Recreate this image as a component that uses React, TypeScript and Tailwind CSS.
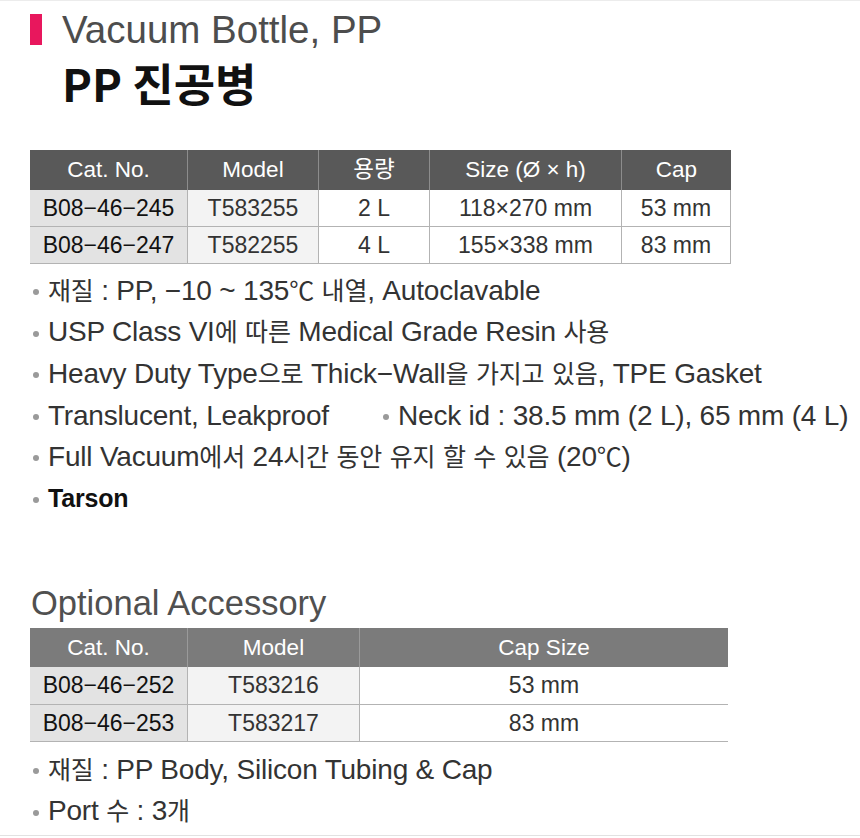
import React from "react";

const FONT = "font-['Liberation_Sans','Noto_Sans_CJK_KR',sans-serif]";

function Mixed({ text }: { text: string }) {
  const parts = text.split(/([\uAC00-\uD7A3\u3131-\u318E℃]+)/);
  return (
    <>
      {parts.map((p, i) =>
        /[\uAC00-\uD7A3\u3131-\u318E℃]/.test(p) ? (
          <span key={i} className="text-[25px]">
            {p}
          </span>
        ) : (
          <React.Fragment key={i}>{p}</React.Fragment>
        )
      )}
    </>
  );
}

function Dot() {
  return <span className="inline-block w-[6px] h-[6px] rounded-full bg-[#9a9a9a] shrink-0 mt-[3px]" />;
}

function Bullet({ text, bold = false }: { text: string; bold?: boolean }) {
  return (
    <div className="flex items-center h-[41.5px] pl-[33px] gap-[9px]">
      <Dot />
      <span
        className={`leading-[41.5px] tracking-[-0.2px] whitespace-nowrap ${
          bold ? "font-bold text-[#111] text-[25px]" : "text-[#333] text-[28px]"
        }`}
      >
        <Mixed text={text} />
      </span>
    </div>
  );
}

export default function App() {
  const t1 = [
    ["B08−46−245", "T583255", "2 L", "118×270 mm", "53 mm"],
    ["B08−46−247", "T582255", "4 L", "155×338 mm", "83 mm"],
  ];
  const t2 = [
    ["B08−46−252", "T583216", "53 mm"],
    ["B08−46−253", "T583217", "83 mm"],
  ];
  return (
    <div className={`w-[860px] h-[838px] bg-white flex flex-col overflow-hidden border-t border-[#ececec] ${FONT}`}>
      {/* Title */}
      <div className="flex items-start pl-[30px] mt-[10px]">
        <span className="w-[12px] h-[31px] bg-[#e8175d] mt-[3px]" />
        <span className="ml-[20px] text-[38.5px] leading-[38px] text-[#4d4d4d]">Vacuum Bottle, PP</span>
      </div>
      <div className="pl-[62px] mt-[12px] font-['Noto_Sans_CJK_KR',sans-serif] text-[45px] leading-[44px] font-bold text-[#111]">
        PP 진공병
      </div>

      {/* Table 1 */}
      <div className="ml-[30px] mt-[45px] w-[701px] grid grid-cols-[158px_131px_111px_192px_109px]">
        {["Cat. No.", "Model", "용량", "Size (Ø × h)", "Cap"].map((h, i) => (
          <div
            key={h}
            className={`h-[40px] bg-[#595959] text-white text-[22.5px] flex items-center justify-center ${
              i < 4 ? "border-r border-[#8c8c8c]" : ""
            }`}
          >
            {h}
          </div>
        ))}
        {t1.map((r) =>
          r.map((c, i) => (
            <div
              key={r[0] + i}
              className={`h-[37px] border-b border-r border-[#b3b3b3] flex items-center justify-center text-[23px] ${
                i === 0 ? "bg-[#e3e3e3] text-[#111]" : i === 1 ? "bg-[#f3f3f3] text-[#333]" : "bg-white text-[#333]"
              }`}
            >
              {c}
            </div>
          ))
        )}
      </div>

      {/* Bullets 1 */}
      <div className="mt-[6px]">
        <Bullet text="재질 : PP, −10 ~ 135℃ 내열, Autoclavable" />
        <Bullet text="USP Class VI에 따른 Medical Grade Resin 사용" />
        <Bullet text="Heavy Duty Type으로 Thick−Wall을 가지고 있음, TPE Gasket" />
        <div className="flex items-center h-[41.5px]">
          <div className="w-[350px] shrink-0">
            <Bullet text="Translucent, Leakproof" />
          </div>
          <Bullet text="Neck id : 38.5 mm (2 L), 65 mm (4 L)" />
        </div>
        <Bullet text="Full Vacuum에서 24시간 동안 유지 할 수 있음 (20℃)" />
        <Bullet text="Tarson" bold />
      </div>

      {/* Optional Accessory */}
      <div className="pl-[31px] mt-[67px] text-[34.5px] leading-[34px] text-[#505050]">Optional Accessory</div>

      <div className="ml-[30px] mt-[8px] w-[698px] grid grid-cols-[158px_172px_368px]">
        {["Cat. No.", "Model", "Cap Size"].map((h, i) => (
          <div
            key={h}
            className={`h-[39px] bg-[#7b7b7b] text-white text-[22.5px] flex items-center justify-center ${
              i < 2 ? "border-r border-[#9a9a9a]" : ""
            }`}
          >
            {h}
          </div>
        ))}
        {t2.map((r, ri) =>
          r.map((c, i) => (
            <div
              key={r[0] + i}
              className={`${ri === 0 ? "h-[38px]" : "h-[37px]"} border-b border-[#b3b3b3] flex items-center justify-center text-[23px] ${
                i === 0 ? "bg-[#e3e3e3] text-[#111] border-r" : i === 1 ? "bg-[#f3f3f3] text-[#333] border-r" : "bg-white text-[#333]"
              }`}
            >
              {c}
            </div>
          ))
        )}
      </div>

      <div className="mt-[7px]">
        <Bullet text="재질 : PP Body, Silicon Tubing & Cap" />
        <Bullet text="Port 수 : 3개" />
      </div>

      <div className="mt-auto mb-[2px] h-px bg-[#e2e2e2]" />
    </div>
  );
}
